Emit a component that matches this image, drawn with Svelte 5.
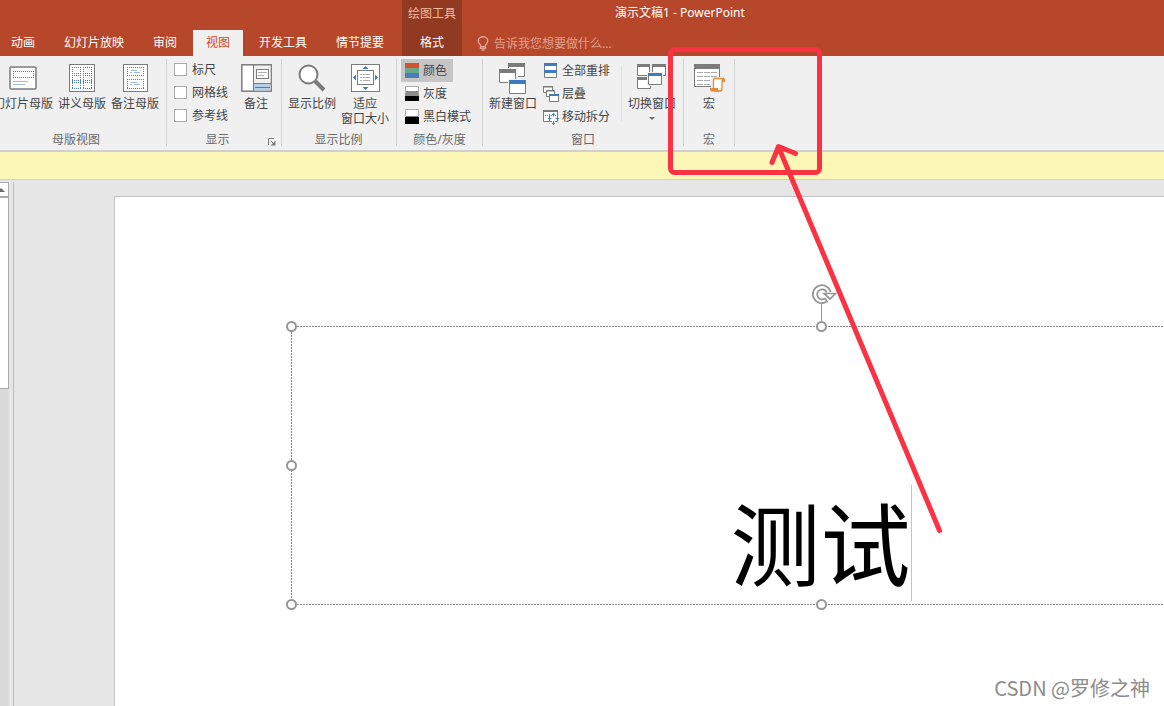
<script>
  const tabs = ["动画", "幻灯片放映", "审阅", "视图", "开发工具", "情节提要"];
  const guides = ["标尺", "网格线", "参考线"];
  const colorModes = [
    { name: "颜色", fills: ["#d35230", "#6aa58e", "#4a7ebb"], border: false },
    { name: "灰度", fills: ["#ffffff", "#8c8c8c", "#000000"], border: true },
    { name: "黑白模式", fills: ["#ffffff", "#000000"], border: true },
  ];
  const handles = ["tl", "tc", "ml", "bl", "bc"];

  let activeTab = $state("视图");
  let colorMode = $state("颜色");
  let query = $state("");
</script>

<div class="app">
  <header>
    <nav class="tabs">
      {#each tabs as tab}
        <button class="tab" class:active={tab === activeTab} onclick={() => (activeTab = tab)}>{tab}</button>
      {/each}
    </nav>
    <div class="contextTabs">
      <span>绘图工具</span>
      <button class:active={activeTab === "格式"} onclick={() => (activeTab = "格式")}>格式</button>
    </div>
    <div class="titleArea">
      <div class="title">演示文稿1 - PowerPoint</div>
      <label class="tellMe">
        <svg width="12" height="15" viewBox="0 0 12 15" fill="none" stroke="#e0a593" stroke-width="1.4">
          <path d="M4 10.500C4 8.500 1.200 7.500 1.200 4.800a4.800 4 0 0 1 9.600 0C10.800 7.500 8 8.500 8 10.500" />
          <path d="M3.500 10.700h5v1.700h-5zM4.500 14h3" />
        </svg>
        <input type="text" bind:value={query} placeholder="告诉我您想要做什么..." aria-label="告诉我您想要做什么" />
      </label>
    </div>
  </header>

  <div class="ribbon">
    <section class="group masters">
      <div class="content">
        <button class="big wide">
          <span class="icon">
            <svg width="28" height="24" viewBox="0 0 28 24">
              <rect x="1" y="1" width="26" height="22" rx="1" fill="#fff" stroke="#7b7b7b" stroke-width="1.500" />
              <path d="M4.500 5v7M24.500 5v7M4 5.500h21M4 11.500h21" fill="none" stroke="#4a7ebb" stroke-dasharray="1 1" />
              <path d="M4 15.500h15M4 18.500h12" stroke="#9db9d8" />
            </svg>
          </span>
          幻灯片母版
        </button>
        <button class="big">
          <span class="icon">
            <svg width="26" height="28" viewBox="0 0 26 28" fill="none">
              <rect x=".5" y=".5" width="25" height="27" fill="#fff" stroke="#7b7b7b" />
              <g stroke="#4a7ebb" stroke-dasharray="1 1">
                <path d="M3.500 3v22M11.500 3v22M14.500 3v22M22.500 3v22" />
                <path d="M3 3.500h9M14 3.500h9M3 9.500h9M14 9.500h9M3 11.500h9M14 11.500h9M3 16.500h9M14 16.500h9M3 18.500h9M14 18.500h9M3 24.500h9M14 24.500h9" />
              </g>
            </svg>
          </span>
          讲义母版
        </button>
        <button class="big">
          <span class="icon">
            <svg width="25" height="28" viewBox="0 0 25 28" fill="none">
              <rect x=".5" y=".5" width="24" height="27" fill="#fff" stroke="#7b7b7b" />
              <g stroke="#4a7ebb" stroke-dasharray="1 1">
                <path d="M4.500 3v9M20.500 3v9M4 3.500h17M4 11.500h17" />
                <path d="M4.500 15v10M20.500 15v10M4 15.500h17M4 24.500h17" />
              </g>
              <path d="M8 6.500h6M11 8.500h6M8 18.500h6M11 20.500h6M7 8.500h2M7 20.500h2" stroke="#9db9d8" />
            </svg>
          </span>
          备注母版
        </button>
      </div>
      <footer><span>母版视图</span></footer>
    </section>

    <section class="group show">
      <div class="content">
        <div class="stack">
          {#each guides as guide}
            <label class="check"><input type="checkbox" />{guide}</label>
          {/each}
        </div>
        <button class="big notes">
          <span class="icon">
            <svg width="31" height="28" viewBox="0 0 31 28">
              <rect x=".8" y=".8" width="29.400" height="26.400" fill="#fff" stroke="#7b7b7b" stroke-width="1.500" />
              <path d="M13 2h16.500v17H13z" fill="#f0f0f0" />
              <path d="M13 20h16.500v6.500H13z" fill="#b9cfe8" />
              <path d="M12.500 1v26M12.500 19.500H30" stroke="#7b7b7b" />
              <rect x="15.500" y="5.500" width="12" height="9" fill="#fff" stroke="#7b7b7b" />
              <path d="M17 8.500h9M17 11.500h6" stroke="#b0b0b0" />
              <path d="M14 23.500h15" stroke="#4a7ebb" />
            </svg>
          </span>
          备注
        </button>
      </div>
      <footer>
        <span>显示</span>
        <button class="launcher" aria-label="显示选项">
          <svg width="8" height="8" viewBox="0 0 8 8" fill="none" stroke="#7b7b7b">
            <path d="M.5 7V.5H6M3 3l3 3" />
            <path d="M7.500 3v4.500H3V7l4-4z" fill="#7b7b7b" stroke="none" />
          </svg>
        </button>
      </footer>
    </section>

    <section class="group zoom">
      <div class="content">
        <button class="big">
          <span class="icon">
            <svg width="28" height="28" viewBox="0 0 28 28" fill="none" stroke="#7b7b7b">
              <circle cx="10.500" cy="10.500" r="9" fill="#fff" stroke-width="2" />
              <path d="M17 17l9 9" stroke-width="4" />
            </svg>
          </span>
          显示比例
        </button>
        <button class="big">
          <span class="icon">
            <svg width="29" height="28" viewBox="0 0 29 28">
              <rect x=".5" y=".5" width="28" height="27" fill="#fff" stroke="#7b7b7b" />
              <rect x="6.500" y="6.500" width="16" height="14" fill="#fff" stroke="#7b7b7b" />
              <path d="M9 10.500h2M12 10.500h7M9 13.500h2M12 13.500h7M9 16.500h2M12 16.500h7" stroke="#b0b0b0" />
              <path d="M14.500 2l3 3h-6zM14.500 26l3-3h-6zM2 13.500l3-3v6zM27 13.500l-3-3v6z" fill="#3a7ac0" />
            </svg>
          </span>
          适应<br />窗口大小
        </button>
      </div>
      <footer><span>显示比例</span></footer>
    </section>

    <section class="group colors">
      <div class="content">
        <div class="stack">
          {#each colorModes as mode}
            <button
              class="small"
              class:pressed={mode.name === colorMode}
              aria-pressed={mode.name === colorMode}
              onclick={() => (colorMode = mode.name)}
            >
              <svg width="14" height="15" viewBox="0 0 14 15">
                {#each mode.fills as fill, i}
                  <rect y={(15 / mode.fills.length) * i} width="14" height={15 / mode.fills.length} {fill} />
                {/each}
                {#if mode.border}
                  <path d="M.5 8V.5h13V8" fill="none" stroke="#ababab" />
                {/if}
              </svg>
              {mode.name}
            </button>
          {/each}
        </div>
      </div>
      <footer><span>颜色/灰度</span></footer>
    </section>

    <section class="group windows">
      <div class="content">
        <button class="big">
          <span class="icon">
            <svg width="28" height="31" viewBox="0 0 28 31">
              <path d="M9.500.5h16v13h-16z" fill="#fff" stroke="#7b7b7b" /><path d="M9 0h17v4H9z" fill="#7b7b7b" />
              <path d="M-1 5h20v15H-1z" fill="#f0f0f0" />
              <path d="M.5 6.500h16v13H.5z" fill="#fff" stroke="#7b7b7b" /><path d="M0 6h17v4H0z" fill="#7b7b7b" />
              <path d="M9 16h19v15H9z" fill="#f0f0f0" />
              <path d="M10.500 17.500h16v13h-16z" fill="#fff" stroke="#7b7b7b" /><path d="M10 17h17v4H10z" fill="#3f7cbf" />
            </svg>
          </span>
          新建窗口
        </button>
        <div class="stack">
          <button class="small">
            <svg width="16" height="16" viewBox="0 0 16 16" fill="#fff" stroke="#7b7b7b">
              <path d="M1.500.5h12v14h-12z" />
              <path d="M1 0h13v3H1zM1 7h13v3H1z" fill="#3f7cbf" stroke="none" />
            </svg>
            全部重排
          </button>
          <button class="small">
            <svg width="16" height="16" viewBox="0 0 16 16" fill="#fff" stroke="#7b7b7b">
              <path d="M.5.500h9v6h-9zM0 1h10" />
              <path d="M3.500 4.500h8v6h-8zM3 5h9" />
              <path d="M6.500 8.500h9v7h-9z" />
              <path d="M6 9h10" stroke="#3f7cbf" stroke-width="2" />
            </svg>
            层叠
          </button>
          <button class="small">
            <svg width="16" height="16" viewBox="0 0 16 16" fill="none">
              <path d="M.5 1.500h14v11H.5z" fill="#fff" stroke="#7b7b7b" />
              <path d="M0 2h15" stroke="#7b7b7b" stroke-width="2" />
              <path d="M2 6.500h11M6.500 5v7" stroke="#7b7b7b" stroke-dasharray="1 1" />
              <path d="M10.500 4v12M5 9.500h11" stroke="#fff" stroke-width="3" />
              <path d="M10.500 4v3.500M10.500 12v4M5 9.500h3.500M12.500 9.500H16M9 5.500h3M9 14.500h3M6.500 8v3M14.500 8v3" stroke="#3f7cbf" />
            </svg>
            移动拆分
          </button>
        </div>
        <i class="divider"></i>
        <button class="big switch">
          <span class="icon">
            <svg width="30" height="28" viewBox="0 0 30 28">
              <g fill="#fff" stroke="#7b7b7b">
                <path d="M.5.500h12v11H.5zM15.500.500h13v11h-13zM.5 13.500h13v11H.5z" />
              </g>
              <path d="M0 0h13v3H0zM15 0h14v3H15zM0 13h13v3H0z" fill="#7b7b7b" />
              <path d="M10 8h16v14H10z" fill="#f0f0f0" />
              <path d="M11.500 9.500h13v11h-13z" fill="#fff" stroke="#7b7b7b" /><path d="M11 9h14v3H11z" fill="#3f7cbf" />
            </svg>
          </span>
          切换窗口
          <svg class="chevron" width="6" height="3" viewBox="0 0 6 3"><path d="M0 0h6L3 3z" fill="#6b6b6b" /></svg>
        </button>
      </div>
      <footer><span>窗口</span></footer>
    </section>

    <section class="group macros">
      <div class="content">
        <button class="big">
          <span class="icon">
            <svg width="31" height="28" viewBox="0 0 31 28">
              <path d="M.5.500h25v22H.5z" fill="#fff" stroke="#7b7b7b" /><path d="M0 0h26v5H0z" fill="#7b7b7b" />
              <path d="M3 8.500h20M3 12.500h20M3 16.500h20M3 20.500h14" stroke="#ababab" stroke-dasharray="6 1" />
              <path d="M17 13h14v15H15v-5h2z" fill="#f0f0f0" />
              <path d="M19.500 24V16q0-1.500 1.500-1.500h8.500V17H28v8q0 2-2 2h-5z" fill="#fff" stroke="#e58a35" stroke-width="1.300" />
              <path d="M28 14h1.500q1.500 0 1.500 2v2h-3zM16 24h8q0 3 2 3.500h-8q-2 0-2-3.500z" fill="#e58a35" />
            </svg>
          </span>
          宏
        </button>
      </div>
      <footer><span>宏</span></footer>
    </section>
  </div>

  <div class="messageBar"></div>

  <main>
    <div class="scrollbar">
      <button class="up" aria-label="向上滚动">
        <svg width="5" height="4" viewBox="0 0 5 4"><path d="M0 4V1l1-1 4 4z" fill="#6b6b6b" /></svg>
      </button>
      <div class="thumb"></div>
    </div>
    <div class="slide">
      <div class="placeholder">
        <h1 contenteditable="true" spellcheck="false">测试</h1>
        <i class="caret"></i>
        {#each handles as pos}
          <i class="handle {pos}"></i>
        {/each}
        <svg class="rotate" width="26" height="40" viewBox="0 0 26 40" fill="none">
          <path d="M10.500 20v18" stroke="#999" />
          <circle cx="11" cy="11" r="9" fill="#fff" />
          <path d="M19.600 9A9 9 0 1 0 16 18.600L14.300 15.300" stroke="#969696" stroke-width="1.800" />
          <path d="M15.800 9.500A5 5 0 1 0 14.300 15.300" stroke="#969696" stroke-width="1.800" />
          <path d="M13 10.500h11.500l-5.500 5.500z" fill="#fff" stroke="#969696" stroke-width="1.700" />
        </svg>
      </div>
    </div>
  </main>

  <svg class="annotation" width="320" height="500" viewBox="0 0 320 500" fill="none" stroke="#fa3244" stroke-linecap="round" stroke-linejoin="round">
    <rect x="10.500" y="9.500" width="149" height="123" rx="4" stroke-width="5" />
    <path d="M279.500 490.500L118.500 107M112 122.500l6.500-16 17 7" stroke-width="5" />
  </svg>
  <div class="watermark">CSDN @罗修之神</div>
</div>

<style>
  :global(body) {
    margin: 0;
  }

  .app {
    position: relative;
    display: flex;
    flex-direction: column;
    min-height: 100vh;
    overflow: hidden;
    background: #e6e6e6;
    color: #444444;
    font: 12px/15px "Noto Sans", "Noto Sans CJK SC", sans-serif;
  }

  button {
    padding: 0;
    border: none;
    background: none;
    color: inherit;
    font: inherit;
    white-space: nowrap;
  }

  svg {
    flex: none;
  }

  header {
    display: flex;
    align-items: flex-end;
    height: 56px;
    background: #b7472a;
    color: white;
  }
  .tabs {
    display: flex;
    gap: 3px;
    margin-right: 5px;
  }
  .tab {
    height: 26px;
    padding: 0 13px 2px;
  }
  .tab:first-child {
    padding-left: 11px;
  }
  .tab.active {
    background: #f0f0f0;
    color: #d24726;
  }
  .contextTabs {
    display: flex;
    flex-direction: column;
    justify-content: space-between;
    align-self: stretch;
    align-items: center;
    width: 60px;
    padding-top: 6px;
    box-sizing: border-box;
    background: #923922;
  }
  .contextTabs span {
    color: #efb8a0;
  }
  .contextTabs button {
    height: 26px;
    padding-bottom: 2px;
  }
  .titleArea {
    display: flex;
    flex: 1;
    flex-direction: column;
    justify-content: space-between;
    align-self: stretch;
    padding: 5px 0 5px 15px;
  }
  .title {
    padding-left: 138px;
  }
  .tellMe {
    display: flex;
    align-items: center;
    gap: 5px;
  }
  .tellMe input {
    width: 160px;
    height: 16px;
    padding: 0;
    border: none;
    outline: none;
    background: transparent;
    color: white;
    font: inherit;
  }
  .tellMe input::placeholder {
    color: #e0a08c;
    opacity: 1;
  }

  .ribbon {
    display: flex;
    height: 91px;
    padding-top: 3px;
    border-bottom: 1px solid #d0d0d0;
    background: #f0f0f0;
  }
  .group {
    display: flex;
    flex-direction: column;
    height: 87px;
    border-right: 1px solid #d2d2d2;
  }
  .content {
    display: flex;
    flex: 1;
  }
  .group footer {
    display: flex;
    height: 14px;
    color: #6a6a6a;
  }
  .group footer span {
    flex: 1;
    text-align: center;
  }
  .masters {
    margin-left: -7px;
    padding-right: 7px;
  }
  .masters .content,
  .zoom .content {
    gap: 5px;
  }
  .zoom {
    padding: 0 7px 0 6px;
  }
  .colors {
    width: 85px;
  }
  .colors .content {
    padding-left: 4px;
  }
  .macros {
    width: 50px;
  }
  .macros .content {
    justify-content: center;
  }

  .big {
    display: flex;
    flex-direction: column;
    align-items: center;
    width: 48px;
  }
  .big.wide {
    width: 60px;
  }
  .big .icon {
    display: flex;
    align-items: center;
    justify-content: center;
    box-sizing: border-box;
    height: 37px;
    padding-top: 1px;
  }
  .notes {
    margin: 0 1px 0 4px;
  }
  .chevron {
    margin-top: 6px;
  }
  .windows .content {
    padding: 0 7px 0 6px;
  }
  .windows .stack {
    margin: 0 7px 0 6px;
  }
  .windows .small {
    padding: 0 4px 0 0;
    gap: 3px;
  }
  .divider {
    width: 1px;
    height: 55px;
    margin: 7px 6px 0 0;
    background: #e0e0e0;
  }

  .stack {
    display: flex;
    flex-direction: column;
    align-items: flex-start;
  }
  .show .stack {
    margin-top: -1px;
  }
  .check {
    display: flex;
    align-items: center;
    gap: 5px;
    height: 23px;
    padding-left: 7px;
  }
  .check input {
    appearance: none;
    box-sizing: border-box;
    width: 13px;
    height: 13px;
    margin: 0;
    border: 1px solid #ababab;
    background: white;
  }
  .check input:checked {
    background: #b7472a;
  }
  .small {
    display: flex;
    align-items: center;
    gap: 4px;
    height: 23px;
    padding: 0 6px 0 4px;
  }
  .small.pressed {
    background: #c5c5c5;
  }
  .launcher {
    display: flex;
    align-items: flex-end;
    width: 10px;
  }
  .show footer {
    padding-right: 3px;
  }

  .messageBar {
    height: 27px;
    border-top: 1px solid #d7d98a;
    border-bottom: 1px solid #d7d98a;
    background: #fcf7b6;
  }

  main {
    display: flex;
    flex: 1;
    padding-top: 2px;
  }
  .scrollbar {
    display: flex;
    flex-direction: column;
    width: 9px;
    padding-right: 4px;
    border-right: 1px solid #bcbcbc;
    background: linear-gradient(to right, #dadada 9px, #e6e6e6 9px);
  }
  .up {
    display: flex;
    align-items: center;
    height: 15px;
    border: 1px solid #ababab;
    border-left: none;
    background: white;
  }
  .thumb {
    height: 190px;
    border: 1px solid #ababab;
    border-left: none;
    background: white;
  }
  .slide {
    flex: 1;
    min-width: 0;
    margin: 14px 0 0 100px;
    border-top: 1px solid #c3c3c3;
    border-left: 1px solid #c3c3c3;
    background: white;
    overflow: hidden;
  }

  .placeholder {
    position: relative;
    display: flex;
    align-items: flex-end;
    justify-content: center;
    box-sizing: border-box;
    width: 1060px;
    height: 279px;
    margin: 129px 0 0 176px;
    padding-bottom: 4px;
    background:
      repeating-linear-gradient(to right, #8a8a8a 0 2px, transparent 2px 3px) top / 100% 1px no-repeat,
      repeating-linear-gradient(to right, #8a8a8a 0 2px, transparent 2px 3px) bottom / 100% 1px no-repeat,
      repeating-linear-gradient(to bottom, #8a8a8a 0 2px, transparent 2px 3px) left / 1px 100% no-repeat;
  }
  h1 {
    margin: 0;
    padding-bottom: 3px;
    outline: none;
    color: black;
    font: 400 90px/116px "Noto Sans CJK SC", sans-serif;
  }
  .caret {
    width: 1px;
    height: 116px;
    background: #c4c4c4;
  }
  .handle {
    position: absolute;
    width: 7px;
    height: 7px;
    border: 2px solid #969696;
    border-radius: 50%;
    background: white;
  }
  .tl,
  .ml,
  .bl {
    left: -5px;
  }
  .tc,
  .bc {
    left: calc(50% - 5px);
  }
  .tl,
  .tc {
    top: -5px;
  }
  .ml {
    top: calc(50% - 6px);
  }
  .bl,
  .bc {
    bottom: -5px;
  }
  .rotate {
    position: absolute;
    top: -43px;
    left: calc(50% - 10px);
  }

  .annotation {
    position: absolute;
    top: 40px;
    left: 660px;
    pointer-events: none;
  }
  .watermark {
    position: absolute;
    right: 14px;
    bottom: 5px;
    color: #8c8c8c;
    font: 400 20px/26px "Noto Sans CJK SC", sans-serif;
  }
</style>
